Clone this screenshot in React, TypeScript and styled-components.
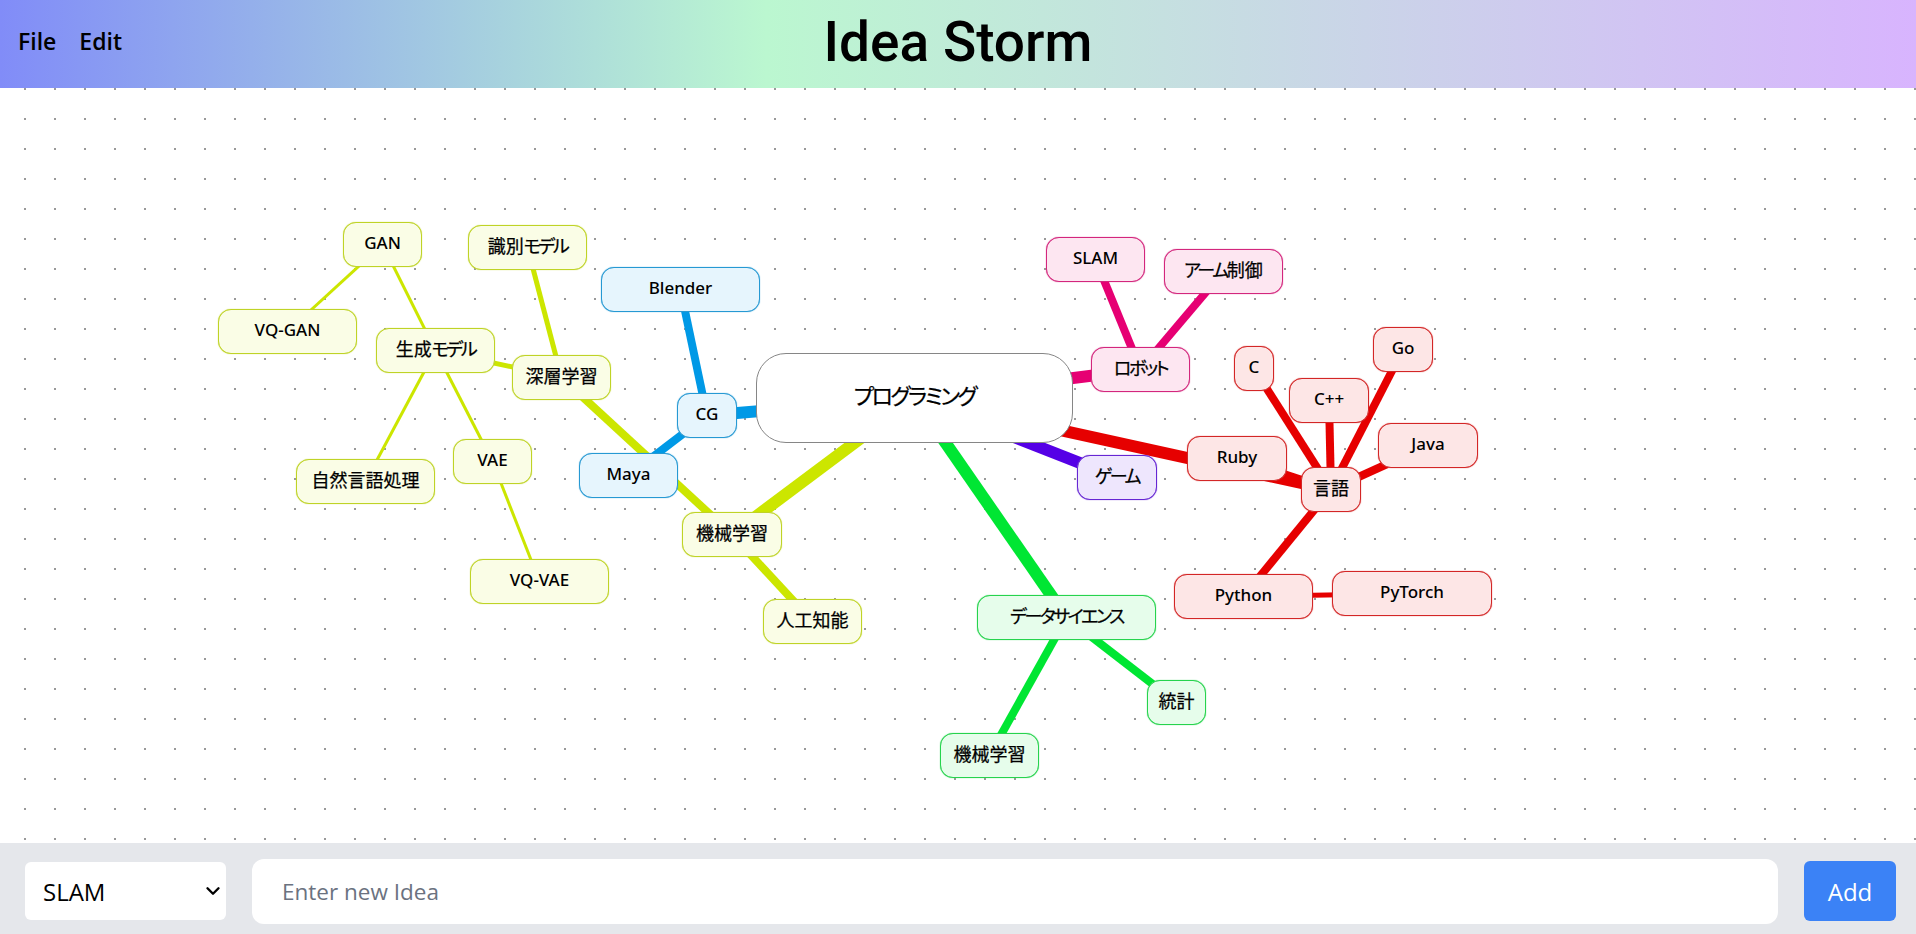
import React, { useState } from 'react';
import styled, { createGlobalStyle } from 'styled-components';
import { ChevronDown } from 'lucide-react';

const GlobalStyle = createGlobalStyle`
  html, body {
    margin: 0;
    padding: 0;
    height: 100%;
    overflow: hidden;
    font-family: "Open Sans", "Noto Sans", "Noto Sans CJK JP", sans-serif;
  }
`;

const Page = styled.div`
  display: flex;
  flex-direction: column;
  width: 100%;
  height: 100vh;
`;

const Header = styled.header`
  position: relative;
  flex: 0 0 88px;
  display: flex;
  align-items: center;
  justify-content: center;
  padding-bottom: 3px;
  box-sizing: border-box;
  background: linear-gradient(to right, #818cf8, #bbf7d0 40%, #d8b4fe);
`;

const Menu = styled.nav`
  position: absolute;
  left: 18px;
  top: 23px;
  display: flex;
  gap: 23px;
`;

const MenuItem = styled.span`
  font-size: 23px;
  line-height: 36px;
  font-weight: 600;
  color: #000;
`;

const Title = styled.h1`
  margin: 0;
  font-family: Roboto, "Open Sans", sans-serif;
  font-size: 55px;
  line-height: 1;
  font-weight: 500;
  color: #000;
`;

const Canvas = styled.main`
  position: relative;
  flex: 1;
  overflow: hidden;
  background-color: #fff;
  background-image: radial-gradient(circle at 25px 1px, #999 0.8px, transparent 1.5px);
  background-size: 30px 30px;
`;

const Edges = styled.svg`
  position: absolute;
  left: 0;
  top: 0;
  width: 100%;
  height: 100%;
`;

const Node = styled.div<{ $color: string; $root?: boolean; $latin?: boolean }>`
  --edge: color-mix(in srgb, ${(p) => p.$color} 75%, #999);
  position: absolute;
  box-sizing: border-box;
  display: flex;
  align-items: center;
  justify-content: center;
  padding-bottom: ${(p) => (p.$root ? 9 : 5)}px;
  font-family: ${(p) => (p.$latin ? '"Noto Sans"' : '"Noto Sans CJK JP"')}, sans-serif;
  font-size: ${(p) => (p.$root ? 22 : p.$latin ? 17 : 18)}px;
  font-weight: ${(p) => (p.$latin ? 500 : 400)};
  font-feature-settings: 'palt';
  -webkit-text-stroke: ${(p) => (p.$latin ? 0 : 0.25)}px #000;
  color: #000;
  border-radius: ${(p) => (p.$root ? 30 : 13)}px;
  border: 1px solid var(--edge);
  box-shadow: ${(p) => (p.$root ? 'none' : '0 0 1px var(--edge)')};
  background: ${(p) => (p.$root ? '#fff' : `color-mix(in srgb, ${p.$color} 10%, #fff)`)};
`;

const Kana = styled.span`
  letter-spacing: -2.4px;
`;

const Footer = styled.footer`
  flex: 0 0 91px;
  display: flex;
  align-items: center;
  gap: 26px;
  padding: 5px 20px 0 25px;
  box-sizing: border-box;
  background: #e5e7eb;
`;

const SelectWrap = styled.div`
  position: relative;
  flex: 0 0 201px;
  height: 58px;
`;

const Select = styled.select`
  appearance: none;
  width: 100%;
  height: 100%;
  border: none;
  border-radius: 6px;
  padding: 0 18px;
  background: #fff;
  font: inherit;
  font-size: 24px;
  color: #000;
`;

const SelectArrow = styled(ChevronDown)`
  position: absolute;
  right: 2px;
  top: 18px;
  width: 22px;
  height: 22px;
  stroke-width: 2.6;
  color: #000;
  pointer-events: none;
`;

const IdeaInput = styled.input`
  flex: 1;
  height: 65px;
  box-sizing: border-box;
  border: none;
  border-radius: 12px;
  padding: 0 30px;
  background: #fff;
  font: inherit;
  font-size: 22.5px;
  &::placeholder {
    color: #6b7280;
  }
`;

const AddButton = styled.button`
  flex: 0 0 92px;
  height: 60px;
  border: none;
  border-radius: 6px;
  background: #3b82f6;
  color: #fff;
  font: inherit;
  font-size: 24px;
`;

const LIME = '#cce600';
const BLUE = '#0099e6';
const PINK = '#e60073';
const RED = '#e60000';
const PURPLE = '#5500e6';
const GREEN = '#00e633';

type Idea = {
  id: string;
  label: string;
  parent?: string;
  color: string;
  x: number;
  y: number; // canvas coordinates
  w: number;
  h?: number;
  line?: number;
};

const ideas: Idea[] = [
  { id: 'root', label: 'プログラミング', color: '#808080', x: 756, y: 265, w: 317, h: 90 },
  { id: 'ml', label: '機械学習', parent: 'root', color: LIME, x: 682, y: 424, w: 100, line: 12 },
  { id: 'ai', label: '人工知能', parent: 'ml', color: LIME, x: 763, y: 511, w: 99, line: 8 },
  { id: 'dl', label: '深層学習', parent: 'ml', color: LIME, x: 512, y: 267, w: 99, line: 8 },
  { id: 'disc', label: '識別モデル', parent: 'dl', color: LIME, x: 468, y: 137, w: 119, line: 5 },
  { id: 'gen', label: '生成モデル', parent: 'dl', color: LIME, x: 376, y: 240, w: 119, line: 5 },
  { id: 'gan', label: 'GAN', parent: 'gen', color: LIME, x: 343, y: 134, w: 79, line: 3 },
  { id: 'vqgan', label: 'VQ-GAN', parent: 'gan', color: LIME, x: 218, y: 221, w: 139, line: 3 },
  { id: 'nlp', label: '自然言語処理', parent: 'gen', color: LIME, x: 296, y: 371, w: 139, line: 3 },
  { id: 'vae', label: 'VAE', parent: 'gen', color: LIME, x: 453, y: 351, w: 79, line: 3 },
  { id: 'vqvae', label: 'VQ-VAE', parent: 'vae', color: LIME, x: 470, y: 471, w: 139, line: 3 },
  { id: 'cg', label: 'CG', parent: 'root', color: BLUE, x: 677, y: 305, w: 60, line: 12 },
  { id: 'blender', label: 'Blender', parent: 'cg', color: BLUE, x: 601, y: 179, w: 159, line: 8 },
  { id: 'maya', label: 'Maya', parent: 'cg', color: BLUE, x: 579, y: 365, w: 99, line: 8 },
  { id: 'robot', label: 'ロボット', parent: 'root', color: PINK, x: 1091, y: 259, w: 99, line: 12 },
  { id: 'slam', label: 'SLAM', parent: 'robot', color: PINK, x: 1046, y: 149, w: 99, line: 8 },
  { id: 'arm', label: 'アーム制御', parent: 'robot', color: PINK, x: 1164, y: 161, w: 119, line: 8 },
  { id: 'game', label: 'ゲーム', parent: 'root', color: PURPLE, x: 1077, y: 367, w: 80, line: 12 },
  { id: 'lang', label: '言語', parent: 'root', color: RED, x: 1301, y: 379, w: 60, line: 12 },
  { id: 'ruby', label: 'Ruby', parent: 'lang', color: RED, x: 1187, y: 348, w: 100, line: 8 },
  { id: 'c', label: 'C', parent: 'lang', color: RED, x: 1234, y: 258, w: 40, line: 8 },
  { id: 'cpp', label: 'C++', parent: 'lang', color: RED, x: 1289, y: 290, w: 80, line: 8 },
  { id: 'go', label: 'Go', parent: 'lang', color: RED, x: 1373, y: 239, w: 60, line: 8 },
  { id: 'java', label: 'Java', parent: 'lang', color: RED, x: 1378, y: 335, w: 100, line: 8 },
  { id: 'python', label: 'Python', parent: 'lang', color: RED, x: 1174, y: 486, w: 139, line: 8 },
  { id: 'pytorch', label: 'PyTorch', parent: 'python', color: RED, x: 1332, y: 483, w: 160, line: 5 },
  { id: 'ds', label: 'データサイエンス', parent: 'root', color: GREEN, x: 977, y: 507, w: 179, line: 12 },
  { id: 'stats', label: '統計', parent: 'ds', color: GREEN, x: 1147, y: 592, w: 59, line: 8 },
  { id: 'ml2', label: '機械学習', parent: 'ds', color: GREEN, x: 940, y: 645, w: 99, line: 8 },
];

const centerOf = (idea: Idea) => ({
  cx: idea.x + idea.w / 2,
  cy: idea.y + (idea.h ?? 45) / 2,
});

const findIdea = (id?: string) => ideas.find((idea) => idea.id === id);

const isLatin = (label: string) => /^[\x20-\x7e]+$/.test(label);

// the katakana runs are set tighter than the kanji next to them
const Label = ({ text }: { text: string }) => (
  <span>
    {text.split(/([\u30a0-\u30ff]+)/).map((run, i) =>
      i % 2 === 1 ? <Kana key={i}>{run}</Kana> : run,
    )}
  </span>
);

const App = () => {
  const [selected, setSelected] = useState('SLAM');
  const [draft, setDraft] = useState('');

  return (
    <Page>
      <GlobalStyle />
      <Header>
        <Menu>
          <MenuItem>File</MenuItem>
          <MenuItem>Edit</MenuItem>
        </Menu>
        <Title>Idea Storm</Title>
      </Header>
      <Canvas>
        <Edges>
          {ideas.map((idea) => {
            const parent = findIdea(idea.parent);
            if (!parent) return null;
            const from = centerOf(parent);
            const to = centerOf(idea);
            return (
              <line
                key={idea.id}
                x1={from.cx}
                y1={from.cy}
                x2={to.cx}
                y2={to.cy}
                stroke={idea.color}
                strokeWidth={idea.line}
              />
            );
          })}
        </Edges>
        {ideas.map((idea) => (
          <Node
            key={idea.id}
            $color={idea.color}
            $root={idea.id === 'root'}
            $latin={isLatin(idea.label)}
            style={{ left: idea.x, top: idea.y, width: idea.w, height: idea.h ?? 45 }}
          >
            <Label text={idea.label} />
          </Node>
        ))}
      </Canvas>
      <Footer>
        <SelectWrap>
          <Select value={selected} onChange={(e) => setSelected(e.target.value)}>
            {ideas.map((idea) => (
              <option key={idea.id} value={idea.label}>
                {idea.label}
              </option>
            ))}
          </Select>
          <SelectArrow />
        </SelectWrap>
        <IdeaInput
          placeholder="Enter new Idea"
          value={draft}
          onChange={(e) => setDraft(e.target.value)}
        />
        <AddButton>Add</AddButton>
      </Footer>
    </Page>
  );
};

export default App;
